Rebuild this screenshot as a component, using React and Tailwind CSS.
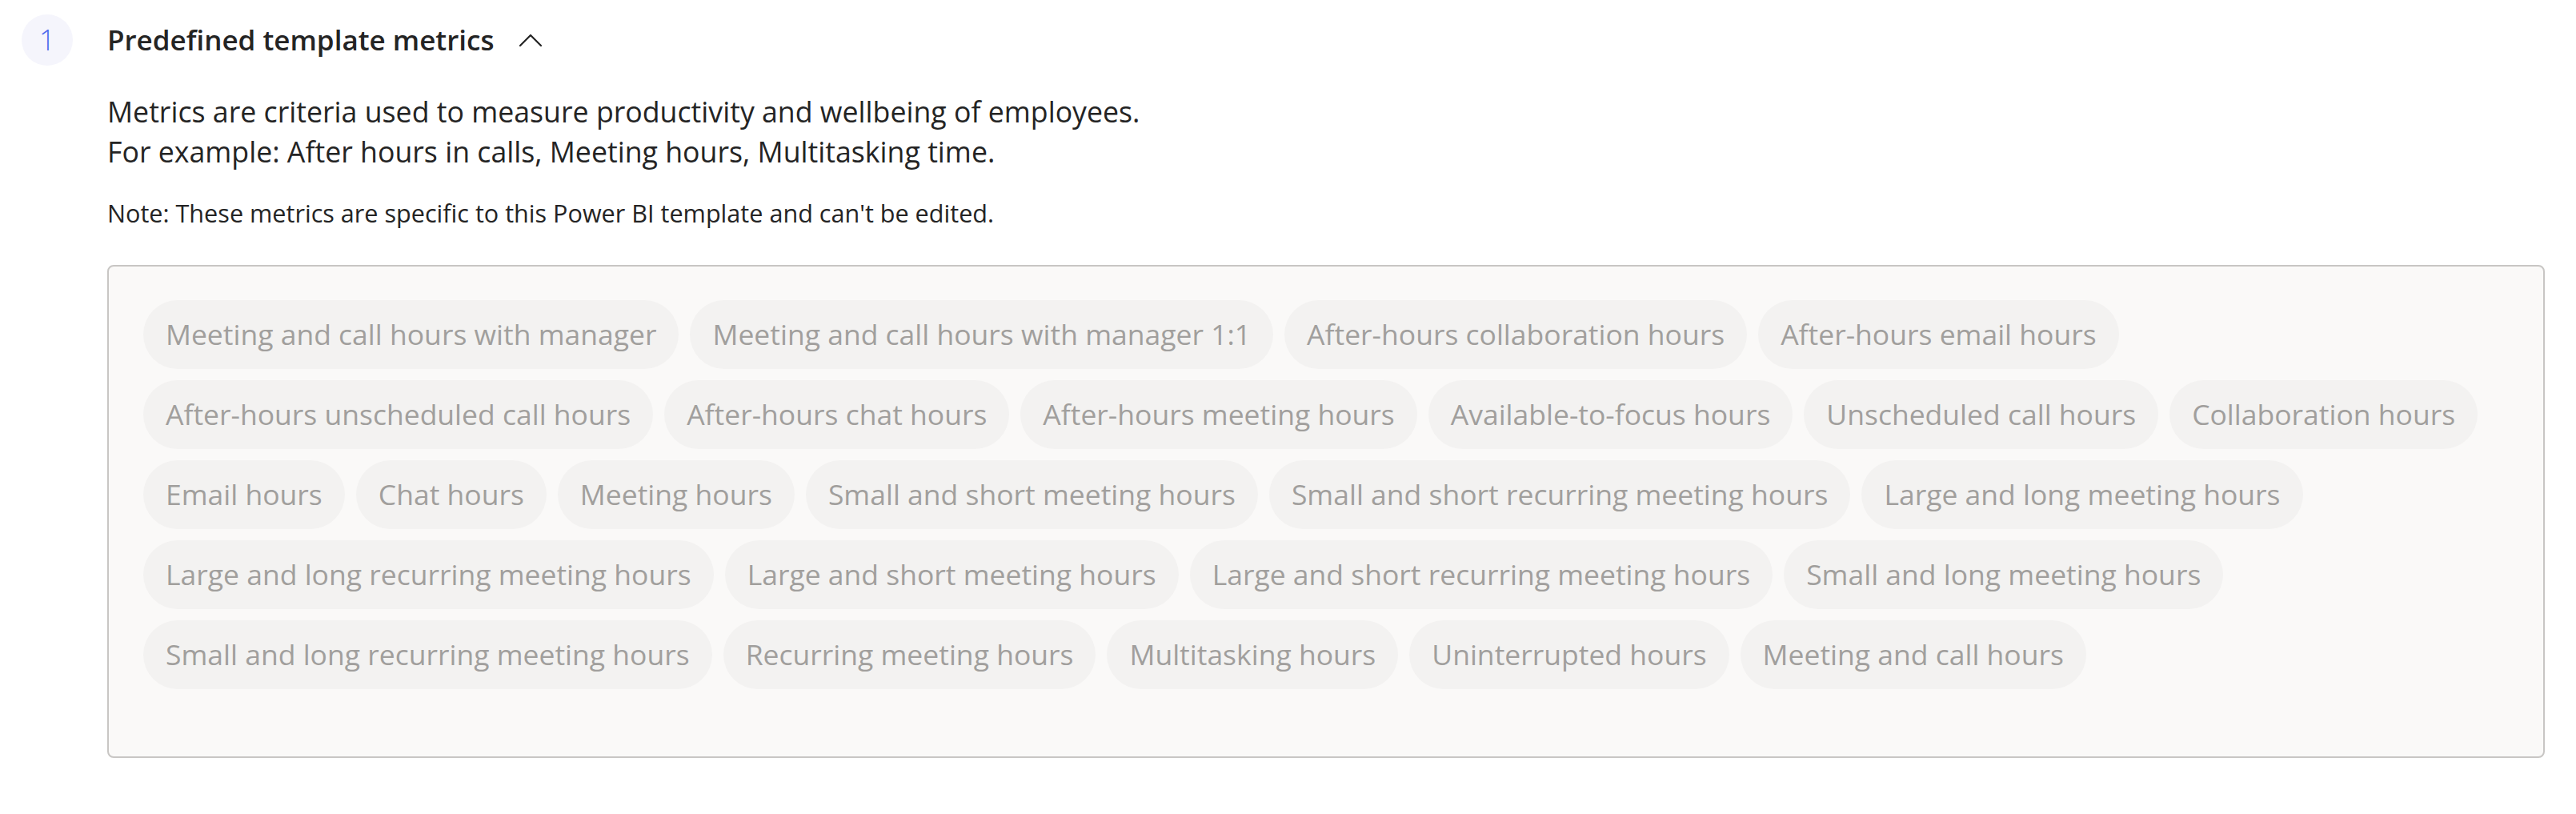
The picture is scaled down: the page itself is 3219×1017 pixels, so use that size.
import React from "react";

const metrics = [
  "Meeting and call hours with manager",
  "Meeting and call hours with manager 1:1",
  "After-hours collaboration hours",
  "After-hours email hours",
  "After-hours unscheduled call hours",
  "After-hours chat hours",
  "After-hours meeting hours",
  "Available-to-focus hours",
  "Unscheduled call hours",
  "Collaboration hours",
  "Email hours",
  "Chat hours",
  "Meeting hours",
  "Small and short meeting hours",
  "Small and short recurring meeting hours",
  "Large and long meeting hours",
  "Large and long recurring meeting hours",
  "Large and short meeting hours",
  "Large and short recurring meeting hours",
  "Small and long meeting hours",
  "Small and long recurring meeting hours",
  "Recurring meeting hours",
  "Multitasking hours",
  "Uninterrupted hours",
  "Meeting and call hours",
];

const MetricChip = ({ label }) => (
  <span className="h-[86px] px-[28px] flex items-center rounded-full bg-[#f3f2f1] text-[#a19f9d] text-[35.5px] whitespace-nowrap">
    {label}
  </span>
);

export default function App() {
  return (
    <div
      className="min-h-[1017px] bg-white text-[#242424] pl-[27px] pr-[39px] pt-[18px]"
      style={{ fontFamily: '"Segoe UI", "Open Sans", "Noto Sans", sans-serif' }}
    >
      <div className="flex items-center">
        <div className="w-[64px] h-[64px] rounded-full bg-[#f5f5fc] flex items-center justify-center text-[36px] font-light text-[#4f6bed]">
          1
        </div>
        <h2 className="ml-[43px] text-[35px] font-semibold">
          Predefined template metrics
        </h2>
        <svg
          className="ml-[30px]"
          width="30"
          height="18"
          viewBox="0 0 30 18"
          fill="none"
        >
          <polyline
            points="2,16 15,3 28,16"
            stroke="#242424"
            strokeWidth="2.2"
            strokeLinejoin="round"
            strokeLinecap="round"
          />
        </svg>
      </div>

      <div className="ml-[107px] mt-[32px]">
        <p className="text-[35.7px] leading-[50px]">
          Metrics are criteria used to measure productivity and wellbeing of
          employees.
          <br />
          For example: After hours in calls, Meeting hours, Multitasking time.
        </p>
        <p className="mt-[32px] text-[30.6px] leading-[40px]">
          Note: These metrics are specific to this Power BI template and can't
          be edited.
        </p>

        <div className="mt-[45px] h-[616px] border-2 border-[#c8c6c4] rounded-[8px] bg-[#faf9f8] pl-[43px] pr-[40px] pt-[42px]">
          <div className="flex flex-wrap gap-[14px]">
            {metrics.map((m) => (
              <MetricChip key={m} label={m} />
            ))}
          </div>
        </div>
      </div>
    </div>
  );
}
